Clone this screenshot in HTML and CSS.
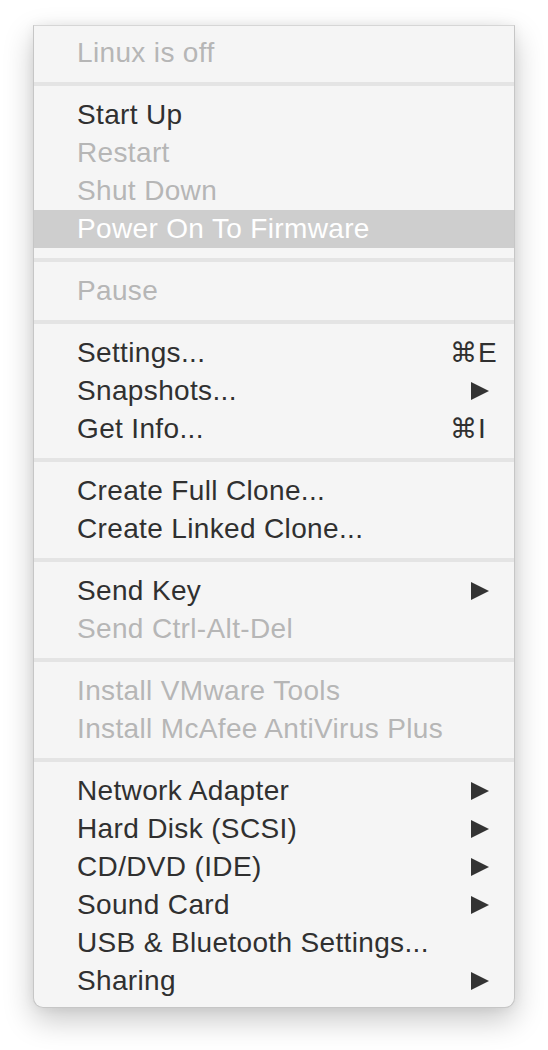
FILE: index.html
```html
<!DOCTYPE html>
<html>
<head>
<meta charset="utf-8">
<link rel="stylesheet" href="styles.css">
</head>
<body>
<div class="page">
<div class="menu">
  <div class="item disabled">Linux is off</div>
  <div class="sep"></div>
  <div class="item">Start Up</div>
  <div class="item disabled">Restart</div>
  <div class="item disabled">Shut Down</div>
  <div class="item selected">Power On To Firmware</div>
  <div class="sep"></div>
  <div class="item disabled">Pause</div>
  <div class="sep"></div>
  <div class="item"><span>Settings...</span><span class="key"><span class="cmd">⌘</span>E</span></div>
  <div class="item"><span>Snapshots...</span><span class="arrow"></span></div>
  <div class="item"><span>Get Info...</span><span class="key"><span class="cmd">⌘</span>I</span></div>
  <div class="sep"></div>
  <div class="item">Create Full Clone...</div>
  <div class="item">Create Linked Clone...</div>
  <div class="sep"></div>
  <div class="item"><span>Send Key</span><span class="arrow"></span></div>
  <div class="item disabled">Send Ctrl-Alt-Del</div>
  <div class="sep"></div>
  <div class="item disabled">Install VMware Tools</div>
  <div class="item disabled">Install McAfee AntiVirus Plus</div>
  <div class="sep"></div>
  <div class="item"><span>Network Adapter</span><span class="arrow"></span></div>
  <div class="item"><span>Hard Disk (SCSI)</span><span class="arrow"></span></div>
  <div class="item"><span>CD/DVD (IDE)</span><span class="arrow"></span></div>
  <div class="item"><span>Sound Card</span><span class="arrow"></span></div>
  <div class="item">USB &amp; Bluetooth Settings...</div>
  <div class="item"><span>Sharing</span><span class="arrow"></span></div>
</div>
</div>
</body>
</html>
```
FILE: styles.css
```css
html, body {
  margin: 0;
  padding: 0;
  background: #ffffff;
}
body {
  font-family: "Liberation Sans", Arial, "DejaVu Sans", sans-serif;
  font-size: 28px;
}
.page {
  padding: 25px 33px 43px 33px;
  min-height: 1050px;
  box-sizing: border-box;
}
.menu {
  width: 480px;
  background: #f5f5f5;
  border: 1px solid #c6c6c6;
  border-top-color: #d6d6d6;
  border-radius: 0 0 10px 10px;
  padding: 8px 0 7px;
  box-shadow: 0 12px 30px rgba(0, 0, 0, 0.22), 0 0 12px rgba(0, 0, 0, 0.06);
}
.item {
  height: 38px;
  line-height: 38px;
  padding: 0 22px 0 43px;
  color: #303030;
  display: flex;
  justify-content: space-between;
  align-items: center;
  white-space: nowrap;
  letter-spacing: 0.35px;
}
.item.disabled {
  color: #b6b6b6;
}
.item.selected {
  background: #cecece;
  color: #ffffff;
}
.sep {
  height: 4px;
  margin: 10px 0;
  background: #e4e4e4;
}
.key {
  width: 42px;
  text-align: left;
  letter-spacing: 0;
}
.cmd {
  font-family: "DejaVu Sans", sans-serif;
  font-size: 27px;
  margin-right: 1px;
}
.arrow {
  width: 0;
  height: 0;
  border-top: 9.5px solid transparent;
  border-bottom: 9.5px solid transparent;
  border-left: 18px solid #333333;
  margin-right: 3px;
}
```
